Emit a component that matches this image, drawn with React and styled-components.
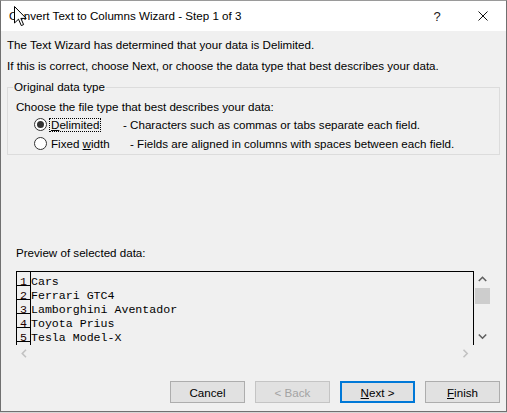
import React from "react";
import styled, { createGlobalStyle } from "styled-components";

const UI_FONT = `"Liberation Sans", Arial, sans-serif`;
const MONO_FONT = `"Liberation Mono", "Courier New", monospace`;

const GlobalStyle = createGlobalStyle`
  html, body {
    margin: 0;
    padding: 0;
    background: #d6d6d6;
  }
  body {
    font-family: ${UI_FONT};
    font-size: 11.6px;
    color: #000;
  }
`;

const Window = styled.div`
  position: relative;
  width: 507px;
  height: 412px;
  box-sizing: border-box;
  border: 1px solid #707070;
  border-top-color: #9a9a9a;
  background: #f0f0f0;
  display: flex;
  flex-direction: column;
  overflow: hidden;
`;

const TitleBar = styled.div`
  height: 30px;
  background: #fff;
  display: flex;
  align-items: center;
`;

const Title = styled.div`
  flex: 1;
  padding-left: 8px;
  line-height: 16px;
  color: #000;
`;

const CaptionButton = styled.div`
  width: 46px;
  height: 30px;
  display: flex;
  align-items: center;
  justify-content: center;
  color: #1a1a1a;
  font-size: 13px;
`;

const Body = styled.div`
  flex: 1;
  display: flex;
  flex-direction: column;
  padding: 6px 6px 0;
`;

const Intro = styled.div`
  line-height: 16px;
  margin-top: ${(p) => p.$gap || 0}px;
`;

const Group = styled.fieldset`
  margin: 5px 0 0;
  padding: 4px 8px 1px;
  border: 1px solid #dcdcdc;
  min-width: 0;
`;

const Legend = styled.legend`
  padding: 0 1px;
  margin-left: -3px;
  line-height: 16px;
`;

const Prompt = styled.div`
  line-height: 16px;
`;

const RadioRow = styled.div`
  display: flex;
  align-items: center;
  height: 19px;
  padding-left: 18px;
`;

const Option = styled.label`
  display: flex;
  align-items: center;
  width: ${(p) => p.$width}px;
  flex: none;
`;

const RadioCircle = styled.span`
  width: 13px;
  height: 13px;
  box-sizing: border-box;
  border-radius: 50%;
  border: 1px solid #333;
  background: #fff;
  display: flex;
  align-items: center;
  justify-content: center;

  &::after {
    content: "";
    width: 7px;
    height: 7px;
    border-radius: 50%;
    background: ${(p) => (p.$checked ? "#333" : "transparent")};
  }
`;

const OptionText = styled.span`
  margin-left: 2px;
  padding: 0 1px;
  line-height: 12px;
  border: 1px dotted ${(p) => (p.$focused ? "#000" : "transparent")};
`;

const Mnemonic = styled.span`
  text-decoration: underline;
  text-underline-offset: 1px;
`;

const Description = styled.span`
  line-height: 16px;
  white-space: nowrap;
`;

const PreviewLabel = styled.div`
  margin-top: 90px;
  padding-left: 9px;
  line-height: 16px;
`;

const Preview = styled.div`
  margin: 10px 0 0 9px;
  display: grid;
  grid-template-columns: 458px 17px;
  grid-template-rows: 74px 17px;
  width: 475px;
`;

const TextArea = styled.div`
  border: 1px solid #000;
  border-bottom: none;
  overflow: hidden;
  font-family: ${MONO_FONT};
  font-size: 11.6px;
`;

const Row = styled.div`
  display: flex;
  height: 14px;
`;

const LineNo = styled.div`
  width: 14px;
  height: 14px;
  box-sizing: border-box;
  border-right: 1px solid #000;
  border-bottom: 1px solid #000;
  text-align: center;
  padding-top: 7px;
  line-height: 6px;
  color: #200;
`;

const LineText = styled.div`
  padding-top: 7px;
  line-height: 6px;
  white-space: pre;
`;

const VScroll = styled.div`
  display: flex;
  flex-direction: column;
`;

const HScroll = styled.div`
  display: flex;
  justify-content: space-between;
`;

const ArrowButton = styled.div`
  width: 17px;
  height: 17px;
  display: flex;
  align-items: center;
  justify-content: center;
  flex: none;
`;

const Thumb = styled.div`
  height: 16px;
  margin: 0 1px;
  background: #cdcdcd;
`;

const Track = styled.div`
  flex: 1;
`;

const ButtonRow = styled.div`
  margin-top: 19px;
  display: flex;
  justify-content: flex-end;
  gap: 10px;
`;

const Button = styled.button`
  width: 75px;
  height: 22px;
  box-sizing: border-box;
  padding: 0;
  font-family: ${UI_FONT};
  font-size: 11.6px;
  background: #e1e1e1;
  color: ${(p) => (p.disabled ? "#a3a3a3" : "#000")};
  border: ${(p) =>
    p.$primary ? "2px solid #0078d7" : `1px solid ${p.disabled ? "#c4c4c4" : "#adadad"}`};
`;

const Cursor = styled.svg`
  position: absolute;
  left: 13px;
  top: 5px;
`;

const chevronPoints = {
  up: "0.8,5 4.5,1.3 8.2,5",
  down: "0.8,1.5 4.5,5.2 8.2,1.5",
  left: "5,0.8 1.3,4.5 5,8.2",
  right: "1.5,0.8 5.2,4.5 1.5,8.2",
};

function Chevron({ dir, color }) {
  const vertical = dir === "up" || dir === "down";
  return (
    <svg
      width={vertical ? 9 : 7}
      height={vertical ? 7 : 9}
      viewBox={vertical ? "0 0 9 7" : "0 0 7 9"}
    >
      <polyline points={chevronPoints[dir]} fill="none" stroke={color} strokeWidth="1.6" />
    </svg>
  );
}

const rows = ["Cars", "Ferrari GTC4", "Lamborghini Aventador", "Toyota Prius", "Tesla Model-X", ""];

export default function App() {
  return (
    <>
      <GlobalStyle />
      <Window>
        <TitleBar>
          <Title>Convert Text to Columns Wizard - Step 1 of 3</Title>
          <CaptionButton>?</CaptionButton>
          <CaptionButton>
            <svg width="10" height="10" viewBox="0 0 10 10">
              <path d="M0.5 0.5 L9.5 9.5 M9.5 0.5 L0.5 9.5" stroke="#111" strokeWidth="1" />
            </svg>
          </CaptionButton>
        </TitleBar>
        <Body>
          <Intro>The Text Wizard has determined that your data is Delimited.</Intro>
          <Intro $gap={5}>
            If this is correct, choose Next, or choose the data type that best describes your data.
          </Intro>
          <Group>
            <Legend>Original data type</Legend>
            <Prompt>Choose the file type that best describes your data:</Prompt>
            <RadioRow>
              <Option $width={89}>
                <RadioCircle $checked />
                <OptionText $focused>
                  <Mnemonic>D</Mnemonic>elimited
                </OptionText>
              </Option>
              <Description>- Characters such as commas or tabs separate each field.</Description>
            </RadioRow>
            <RadioRow>
              <Option $width={96}>
                <RadioCircle />
                <OptionText>
                  Fixed <Mnemonic>w</Mnemonic>idth
                </OptionText>
              </Option>
              <Description>- Fields are aligned in columns with spaces between each field.</Description>
            </RadioRow>
          </Group>
          <PreviewLabel>Preview of selected data:</PreviewLabel>
          <Preview>
            <TextArea>
              {rows.map((text, i) => (
                <Row key={i}>
                  <LineNo>{text ? i + 1 : ""}</LineNo>
                  <LineText>{text}</LineText>
                </Row>
              ))}
            </TextArea>
            <VScroll>
              <ArrowButton>
                <Chevron dir="up" color="#606060" />
              </ArrowButton>
              <Thumb />
              <Track />
              <ArrowButton>
                <Chevron dir="down" color="#606060" />
              </ArrowButton>
            </VScroll>
            <HScroll>
              <ArrowButton>
                <Chevron dir="left" color="#c2c2c2" />
              </ArrowButton>
              <ArrowButton>
                <Chevron dir="right" color="#c2c2c2" />
              </ArrowButton>
            </HScroll>
            <div />
          </Preview>
          <ButtonRow>
            <Button>Cancel</Button>
            <Button disabled>&lt; Back</Button>
            <Button $primary>
              <Mnemonic>N</Mnemonic>ext &gt;
            </Button>
            <Button>
              <Mnemonic>F</Mnemonic>inish
            </Button>
          </ButtonRow>
        </Body>
        <Cursor width="14" height="22" viewBox="0 0 14 22">
          <path
            d="M0.5 0.5 V17 L4.5 13.2 L7.3 19.6 L9.6 18.6 L6.9 12.4 H12.2 Z"
            fill="#fff"
            stroke="#000"
            strokeWidth="1"
            strokeLinejoin="miter"
          />
        </Cursor>
      </Window>
    </>
  );
}
